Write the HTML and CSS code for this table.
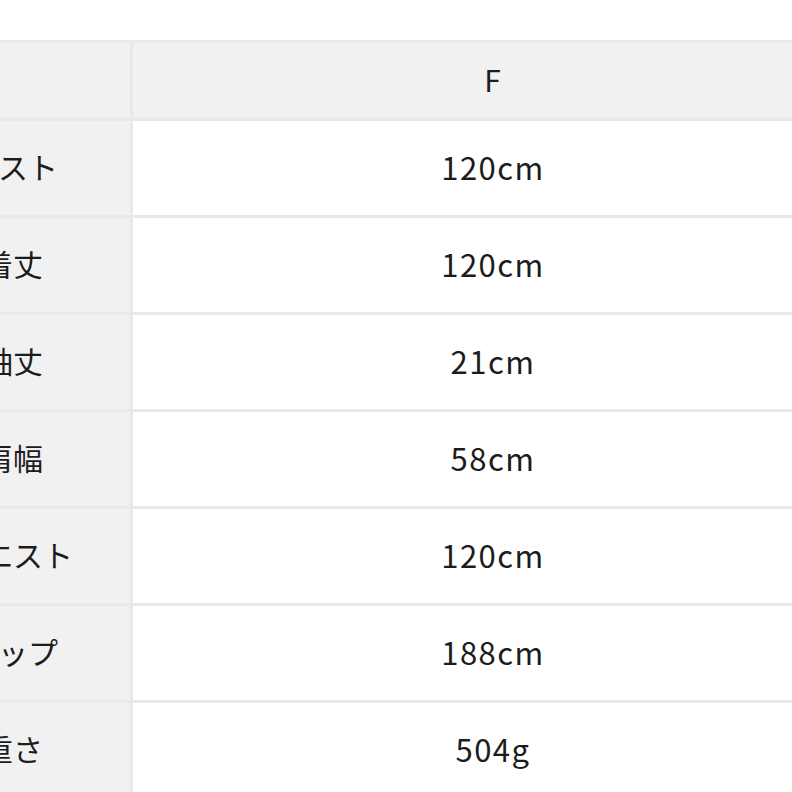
FILE: index.html
```html
<!DOCTYPE html>
<html lang="ja">
<head>
<meta charset="utf-8">
<link rel="stylesheet" href="styles.css">
</head>
<body>
<div class="wrap">
<table class="size-table">
  <tr class="head-row"><th class="label"></th><th class="value">F</th></tr>
  <tr><th class="label">バスト</th><td class="value">120cm</td></tr>
  <tr><th class="label">着丈</th><td class="value">120cm</td></tr>
  <tr><th class="label">袖丈</th><td class="value">21cm</td></tr>
  <tr><th class="label">肩幅</th><td class="value">58cm</td></tr>
  <tr><th class="label">ウエスト</th><td class="value">120cm</td></tr>
  <tr><th class="label">ヒップ</th><td class="value">188cm</td></tr>
  <tr><th class="label">重さ</th><td class="value">504g</td></tr>
</table>
</div>
</body>
</html>
```
FILE: styles.css
```css
html, body {
  margin: 0;
  padding: 0;
  background: #ffffff;
  overflow: hidden;
}
.wrap {
  width: 792px;
  height: 792px;
  overflow: hidden;
  padding-top: 40px;
  box-sizing: border-box;
}
.size-table {
  margin-left: -107px;
  width: 963px;
  border-collapse: separate;
  border-spacing: 3px;
  background: #e9e9e9;
  table-layout: fixed;
  font-family: "Hiragino Sans", "Noto Sans CJK JP", "Noto Sans", sans-serif;
  font-size: 30px;
  font-weight: 400;
  color: #1c1c1c;
}
.size-table th,
.size-table td {
  text-align: center;
  vertical-align: middle;
  font-weight: 400;
  padding: 0 0 4px 0;
  height: 94px;
  box-sizing: border-box;
}
.size-table .head-row th {
  height: 75px;
  background: #f1f1f1;
}
.label {
  width: 234px;
  background: #f1f1f1;
}
td.value {
  background: #ffffff;
  font-size: 31px;
  letter-spacing: 1.5px;
}
th.value {
  letter-spacing: 1px;
}
```
